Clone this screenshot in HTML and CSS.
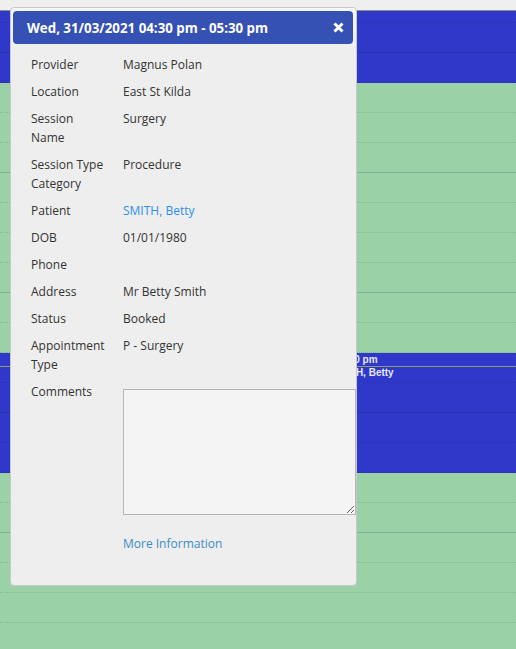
FILE: index.html
```html
<!DOCTYPE html>
<html>
<head>
<meta charset="utf-8">
<link rel="stylesheet" href="styles.css">
</head>
<body>
<div class="topbar"></div>
<div class="calendar">
  <div class="event ev1"></div>
  <div class="event ev2">
    <div class="ev-head">04:30 pm - 05:30 pm</div>
    <div class="ev-body">SMITH, Betty</div>
  </div>
  <div class="grid">
    <div class="slot"></div><div class="slot"></div><div class="slot"></div><div class="slot"></div>
    <div class="slot"></div><div class="slot"></div><div class="slot"></div><div class="slot"></div>
    <div class="slot"></div><div class="slot"></div><div class="slot"></div><div class="slot"></div>
    <div class="slot"></div><div class="slot"></div><div class="slot"></div><div class="slot"></div>
    <div class="slot"></div><div class="slot"></div><div class="slot"></div><div class="slot"></div>
    <div class="slot"></div><div class="slot"></div>
  </div>
</div>

<div class="popup">
  <div class="popup-head">
    <span class="popup-title">Wed, 31/03/2021 04:30 pm - 05:30 pm</span>
    <span class="close">
      <svg width="11" height="11" viewBox="0 0 11 11"><path d="M1.5 1.5 L9.5 9.5 M9.5 1.5 L1.5 9.5" stroke="#fff" stroke-width="3" fill="none"/></svg>
    </span>
  </div>
  <div class="details">
    <div class="lbl">Provider</div><div class="val">Magnus Polan</div>
    <div class="lbl">Location</div><div class="val">East St Kilda</div>
    <div class="lbl">Session<br>Name</div><div class="val">Surgery</div>
    <div class="lbl">Session Type<br>Category</div><div class="val">Procedure</div>
    <div class="lbl">Patient</div><div class="val"><a class="patient" href="#">SMITH, Betty</a></div>
    <div class="lbl">DOB</div><div class="val">01/01/1980</div>
    <div class="lbl">Phone</div><div class="val"></div>
    <div class="lbl">Address</div><div class="val">Mr Betty Smith</div>
    <div class="lbl">Status</div><div class="val">Booked</div>
    <div class="lbl">Appointment<br>Type</div><div class="val">P - Surgery</div>
    <div class="lbl">Comments</div><div class="val"><textarea class="comments"></textarea></div>
    <div class="lbl"></div><div class="val"><a class="more" href="#">More Information</a></div>
  </div>
</div>
</body>
</html>
```

FILE: styles.css
```css
html, body {
  margin: 0;
  padding: 0;
}
body {
  background: #efefef;
  width: 516px;
  height: 649px;
  overflow: hidden;
  position: relative;
}
.topbar {
  height: 10px;
  border-bottom: 1px solid #8e8e8e;
  background: #efefef;
}
.calendar {
  position: relative;
  height: 638px;
  overflow: hidden;
  background: #9ad1a6;
}
.grid {
  position: relative;
  z-index: 2;
  margin-top: -18px;
}
.slot {
  height: 30px;
  box-sizing: border-box;
  border-bottom: 1px dotted rgba(0, 0, 0, 0.12);
}
.slot:nth-child(4n+2) {
  border-bottom: 1px solid rgba(0, 0, 0, 0.17);
}
.event {
  position: absolute;
  left: 0;
  right: 0;
  z-index: 1;
  background: #2f38c8;
  color: #e6e8ff;
  font-family: "Liberation Sans", Arial, sans-serif;
  font-weight: bold;
  font-size: 10px;
}
.ev1 {
  top: 0;
  height: 72px;
}
.ev2 {
  top: 342px;
  height: 120px;
}
.ev-head {
  height: 13px;
  line-height: 13px;
  border-bottom: 1px solid #8c9a72;
  padding-left: 282px;
  white-space: nowrap;
}
.ev-body {
  line-height: 12px;
  padding-left: 332px;
  white-space: nowrap;
}

.popup {
  position: absolute;
  left: 10px;
  top: 7px;
  width: 347px;
  height: 579px;
  box-sizing: border-box;
  z-index: 10;
  border: 1px solid #c8c8c8;
  border-radius: 4px;
  padding: 3px 3px 3px 2px;
  background: linear-gradient(to bottom, #f7f7f7 0px, #eeeeee 40px, #eeeeee 100%);
  font-family: "Open Sans", "Noto Sans", sans-serif;
  font-size: 12px;
  color: #333333;
}
.popup-head {
  height: 33px;
  box-sizing: border-box;
  background: #3651b4;
  border-radius: 4px;
  display: flex;
  align-items: center;
  justify-content: space-between;
  padding: 0 9px 0 14px;
  color: #ffffff;
}
.popup-title {
  font-family: "Open Sans", "Noto Sans", sans-serif;
  font-weight: bold;
  font-size: 13.3px;
}
.close {
  display: flex;
  width: 11px;
  height: 11px;
}
.details {
  display: grid;
  grid-template-columns: 92px 1fr;
  row-gap: 8px;
  line-height: 19px;
  padding: 11px 0 0 18px;
}
.patient {
  color: #2b8ff0;
  text-decoration: none;
}
.more {
  color: #3a8dc4;
  text-decoration: none;
  display: inline-block;
  margin-top: 11px;
}
.comments {
  display: block;
  margin: 7px 0 0 0;
  width: 233px;
  height: 126px;
  box-sizing: border-box;
  border: 1px solid #b7b7b7;
  background: #f4f4f4;
  padding: 2px;
  font-family: "Open Sans", sans-serif;
  font-size: 12px;
}
```
